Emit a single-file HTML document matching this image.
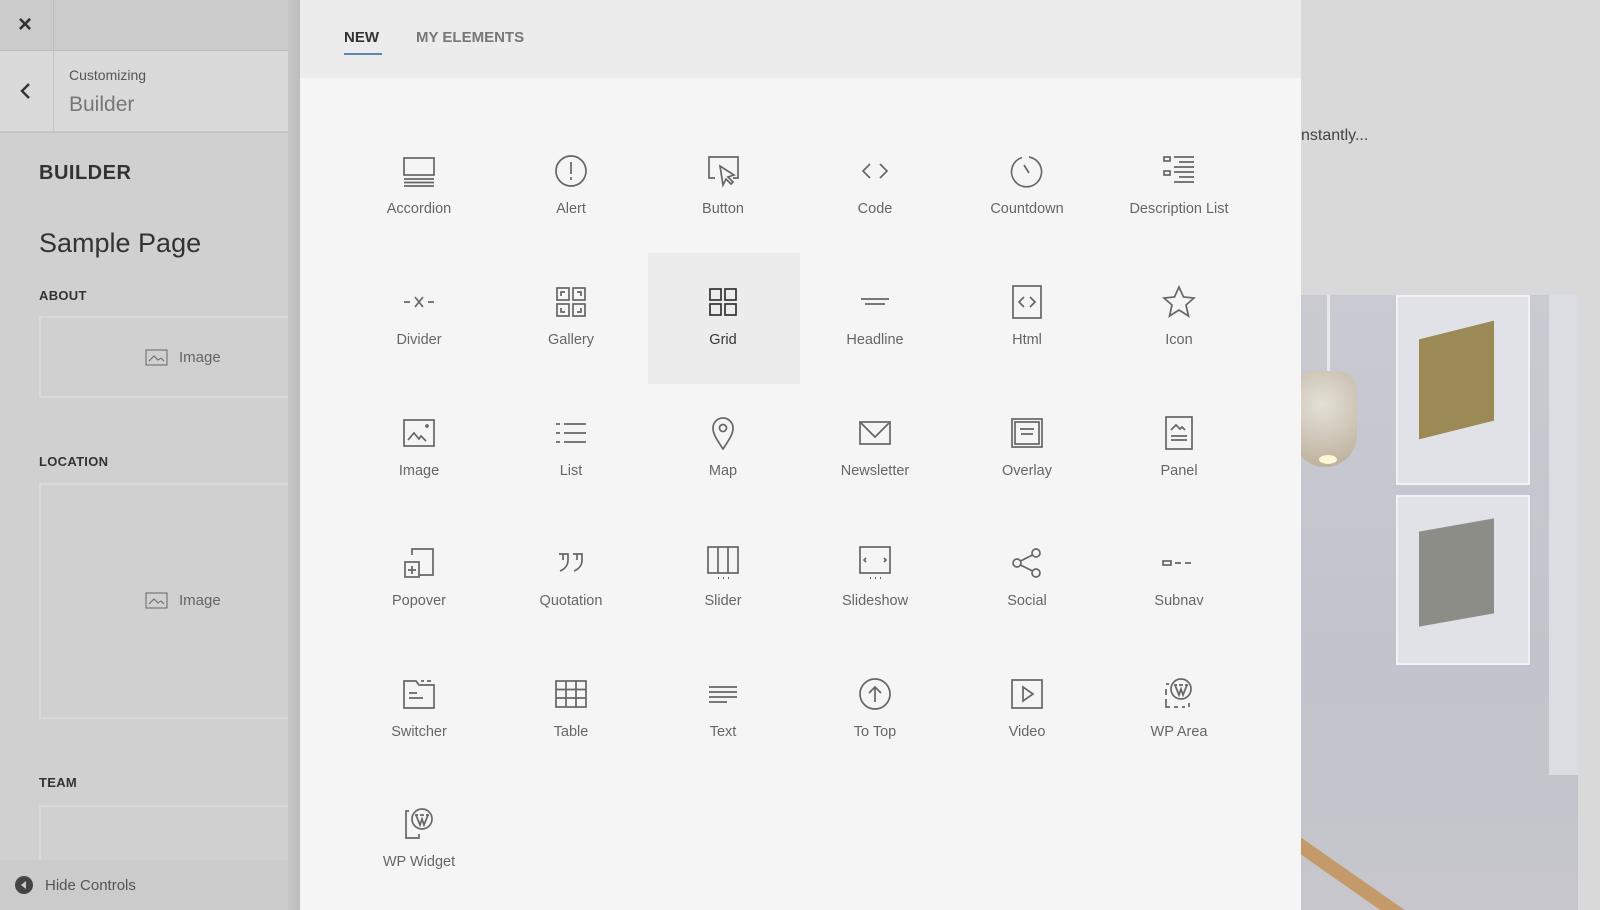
<!DOCTYPE html>
<html><head><meta charset="utf-8"><style>
*{margin:0;padding:0;box-sizing:border-box}
html,body{width:1600px;height:910px;overflow:hidden}
body{position:relative;background:#d8d8d8;font-family:"Liberation Sans",sans-serif}
.abs{position:absolute}
.lp{left:0;top:0;width:300px;height:910px;background:#d0d0d0;overflow:hidden}
.modal{left:300px;top:0;width:1001px;height:910px;background:#f5f5f5;overflow:hidden}
.hdr{left:0;top:0;width:1001px;height:78px;background:#ececec}
.cell{position:absolute;width:152px;height:131px;text-align:center}
.cell svg{position:absolute;left:59px;top:32px;width:34px;height:34px;fill:none;stroke:#666;stroke-width:1.7}
.cell span{position:absolute;left:0;width:152px;top:78px;font-size:14.5px;color:#666;line-height:18px}
.sec{font-size:13px;font-weight:bold;color:#333;letter-spacing:.3px}
.box{border:2px solid #dadada;left:39px;width:270px}
.imgl{font-size:15px;color:#666}
</style></head><body>
<!-- right preview -->
<div class="abs" style="left:1301px;top:0;width:299px;height:910px;background:#d9d9d9"></div>
<div class="abs" style="left:1301px;top:127px;font-size:16px;color:#444">nstantly...</div>
<div class="abs" style="left:1301px;top:295px;width:277px;height:615px;background:linear-gradient(180deg,#c9cad2,#c2c3cc 60%,#c6c6cc);overflow:hidden">
  <div class="abs" style="left:26px;top:0;width:3px;height:78px;background:#e8e8e8"></div>
  <div class="abs" style="left:-8px;top:76px;width:64px;height:96px;border-radius:20px 20px 32px 32px;background:radial-gradient(circle at 45% 35%,#e4e0d8,#b9ab95)"></div>
  <div class="abs" style="left:18px;top:160px;width:18px;height:9px;border-radius:50%;background:#fff6d8"></div>
  <div class="abs" style="left:95px;top:0;width:134px;height:190px;background:#e1e2e8;border:2px solid #f0f0f5"></div>
  <div class="abs" style="left:118px;top:35px;width:75px;height:100px;background:#9b8a55;transform:skewY(-14deg)"></div>
  <div class="abs" style="left:95px;top:200px;width:134px;height:170px;background:#e1e2e8;border:2px solid #f0f0f5"></div>
  <div class="abs" style="left:118px;top:230px;width:75px;height:95px;background:#8d8d88;transform:skewY(-10deg)"></div>
  <div class="abs" style="left:248px;top:0;width:29px;height:480px;background:#dcdde3"></div>
  <div class="abs" style="left:-20px;top:530px;width:240px;height:14px;background:#c49a6a;transform:rotate(35deg);transform-origin:left"></div>
</div>
<!-- left panel -->
<div class="abs lp">
  <div class="abs" style="left:0;top:0;width:300px;height:51px;background:#cbcbcb;border-bottom:1px solid #bdbdbd"></div>
  <div class="abs" style="left:53px;top:0;width:1px;height:133px;background:#bdbdbd"></div>
  <div class="abs" style="left:18px;top:11px;font-size:24px;font-weight:bold;color:#333">×</div>
  <div class="abs" style="left:0;top:51px;width:300px;height:82px;background:#dadada;border-bottom:2px solid #c4c4c4"></div>
  <div class="abs" style="left:53px;top:51px;width:1px;height:82px;background:#c4c4c4"></div>
  <svg class="abs" style="left:19px;top:82px" width="14" height="18"><path d="M10 2L3 9l7 7" stroke="#333" stroke-width="2.4" fill="none"/></svg>
  <div class="abs" style="left:69px;top:67px;font-size:14px;color:#555">Customizing</div>
  <div class="abs" style="left:69px;top:93px;font-size:21px;color:#777">Builder</div>
  <div class="abs" style="left:39px;top:162px;font-size:20px;font-weight:bold;color:#333;letter-spacing:.5px">BUILDER</div>
  <div class="abs" style="left:39px;top:228px;font-size:27px;color:#333">Sample Page</div>
  <div class="abs sec" style="left:39px;top:288px">ABOUT</div>
  <div class="abs box" style="top:316px;height:82px"></div>
  <svg class="abs" style="left:145px;top:349px" width="23" height="17"><rect x="1" y="1" width="21" height="15" fill="none" stroke="#666"/><path d="M4 12l5-5 4 4 3-2 3 3" fill="none" stroke="#666"/></svg>
  <div class="abs imgl" style="left:179px;top:349px">Image</div>
  <div class="abs sec" style="left:39px;top:454px">LOCATION</div>
  <div class="abs box" style="top:483px;height:236px"></div>
  <svg class="abs" style="left:145px;top:592px" width="23" height="17"><rect x="1" y="1" width="21" height="15" fill="none" stroke="#666"/><path d="M4 12l5-5 4 4 3-2 3 3" fill="none" stroke="#666"/></svg>
  <div class="abs imgl" style="left:179px;top:592px">Image</div>
  <div class="abs sec" style="left:39px;top:775px">TEAM</div>
  <div class="abs box" style="top:805px;height:80px"></div>
  <div class="abs" style="left:0;top:860px;width:288px;height:50px;background:#cbcbcb"></div>
  <div class="abs" style="left:15px;top:876px;width:18px;height:18px;border-radius:50%;background:#444"></div>
  <svg class="abs" style="left:15px;top:876px" width="18" height="18"><path d="M11 5L6 9l5 4z" fill="#cbcbcb"/></svg>
  <div class="abs" style="left:45px;top:877px;font-size:15px;color:#555">Hide Controls</div>
  <div class="abs" style="left:288px;top:0;width:12px;height:910px;background:linear-gradient(90deg,#c8c8c8,#bcbcbc)"></div>
</div>
<!-- modal -->
<div class="abs modal">
  <div class="abs hdr">
    <div class="abs" style="left:44px;top:29px;font-size:15px;font-weight:bold;color:#333">NEW</div>
    <div class="abs" style="left:44px;top:53px;width:38px;height:2px;background:#5b85b5"></div>
    <div class="abs" style="left:116px;top:29px;font-size:15px;font-weight:bold;color:#777">MY ELEMENTS</div>
  </div>
  <div class="abs" style="left:43px;top:0;width:912px;height:910px">
  <div class="cell" style="left:0;top:122px"><svg viewBox="0 0 34 34"><rect x="2" y="4" width="30" height="17"/><path d="M2 25h30M2 28.5h30M2 32h30"/></svg><span>Accordion</span></div>
  <div class="cell" style="left:152px;top:122px"><svg viewBox="0 0 34 34"><circle cx="17" cy="17" r="15"/><path d="M17 8v12M17 23v3"/></svg><span>Alert</span></div>
  <div class="cell" style="left:304px;top:122px"><svg viewBox="0 0 34 34"><path d="M9 24H3V3h29v21h-5"/><path d="M14 12l3 19 3-6 5 5 2-2-5-5 6-2z"/></svg><span>Button</span></div>
  <div class="cell" style="left:456px;top:122px"><svg viewBox="0 0 34 34"><path d="M12 10l-7 7 7 7M22 10l7 7-7 7"/></svg><span>Code</span></div>
  <div class="cell" style="left:608px;top:122px"><svg viewBox="0 0 34 34"><path d="M19 3A15 15 0 1 1 12 3.5"/><path d="M14 11l5 8"/></svg><span>Countdown</span></div>
  <div class="cell" style="left:760px;top:122px"><svg viewBox="0 0 34 34"><rect x="2" y="3" width="6" height="4"/><rect x="2" y="17" width="6" height="4"/><path d="M12 3h20M17 8h15M12 13h20M12 18h20M17 23h15M12 28h20"/></svg><span>Description List</span></div>
  <div class="abs" style="left:305px;top:253px;width:152px;height:131px;background:#ececec"></div>
  <div class="cell" style="left:0;top:253px"><svg viewBox="0 0 34 34"><path d="M2 17h6M26 17h6M13 12l8 10M21 12l-8 10"/></svg><span>Divider</span></div>
  <div class="cell" style="left:152px;top:253px"><svg viewBox="0 0 34 34"><rect x="3" y="3" width="12" height="12"/><rect x="19" y="3" width="12" height="12"/><rect x="3" y="19" width="12" height="12"/><rect x="19" y="19" width="12" height="12"/><path d="M7 11V7h4M23 7h4v4M7 23v4h4M23 27h4v-4"/></svg><span>Gallery</span></div>
  <div class="cell" style="left:304px;top:253px"><svg viewBox="0 0 34 34" style="stroke:#333"><rect x="4" y="4" width="11" height="11"/><rect x="19" y="4" width="11" height="11"/><rect x="4" y="19" width="11" height="11"/><rect x="19" y="19" width="11" height="11"/></svg><span style="color:#333">Grid</span></div>
  <div class="cell" style="left:456px;top:253px"><svg viewBox="0 0 34 34"><path d="M3 14h28M7 19h20"/></svg><span>Headline</span></div>
  <div class="cell" style="left:608px;top:253px"><svg viewBox="0 0 34 34"><rect x="3" y="1" width="28" height="32"/><path d="M14 12l-5 5 5 5M20 12l5 5-5 5"/></svg><span>Html</span></div>
  <div class="cell" style="left:760px;top:253px"><svg viewBox="0 0 34 34"><path d="M17 2l4.5 10 10.5 1-8 7 2.5 11-9.5-6-9.5 6 2.5-11-8-7 10.5-1z"/></svg><span>Icon</span></div>
  <div class="cell" style="left:0;top:384px"><svg viewBox="0 0 34 34"><rect x="2" y="4" width="30" height="26"/><path d="M6 24l6-7 5 6 2-3 5 5"/><circle cx="25" cy="10" r="1"/></svg><span>Image</span></div>
  <div class="cell" style="left:152px;top:384px"><svg viewBox="0 0 34 34"><path d="M2 8h4M2 17h4M2 26h4M10 8h22M10 17h22M10 26h22"/></svg><span>List</span></div>
  <div class="cell" style="left:304px;top:384px"><svg viewBox="0 0 34 34"><path d="M17 33C9 21 7 17 7 12a10 10 0 0 1 20 0c0 5-2 9-10 21z"/><circle cx="17" cy="12" r="3.5"/></svg><span>Map</span></div>
  <div class="cell" style="left:456px;top:384px"><svg viewBox="0 0 34 34"><rect x="2" y="6" width="30" height="22"/><path d="M2 6l15 15 15-15"/></svg><span>Newsletter</span></div>
  <div class="cell" style="left:608px;top:384px"><svg viewBox="0 0 34 34"><rect x="2" y="3" width="30" height="28"/><rect x="5" y="6" width="24" height="22"/><path d="M10 13h14M11 18h12"/></svg><span>Overlay</span></div>
  <div class="cell" style="left:760px;top:384px"><svg viewBox="0 0 34 34"><rect x="4" y="1" width="26" height="32"/><path d="M9 14l5-5 4 4 2-2 3 3M9 20h16M9 24h16"/></svg><span>Panel</span></div>
  <div class="cell" style="left:0;top:514px"><svg viewBox="0 0 34 34"><path d="M10 9V3h21v26H17"/><rect x="3" y="16" width="14" height="15"/><path d="M10 20v8M6 24h8"/></svg><span>Popover</span></div>
  <div class="cell" style="left:152px;top:514px"><svg viewBox="0 0 34 34"><path d="M5 8h9v6c0 5-3 9-8 11M9 8v6M19 8h9v6c0 5-3 9-8 11M23 8v6"/></svg><span>Quotation</span></div>
  <div class="cell" style="left:304px;top:514px"><svg viewBox="0 0 34 34"><rect x="2" y="1" width="30" height="26"/><path d="M12 1v26M22 1v26"/><path d="M12 32h1M17 32h1M22 32h1" stroke-width="2"/></svg><span>Slider</span></div>
  <div class="cell" style="left:456px;top:514px"><svg viewBox="0 0 34 34"><rect x="2" y="1" width="30" height="26"/><path d="M8 12l-2 2 2 2M26 12l2 2-2 2"/><path d="M12 32h1M17 32h1M22 32h1" stroke-width="2"/></svg><span>Slideshow</span></div>
  <div class="cell" style="left:608px;top:514px"><svg viewBox="0 0 34 34"><circle cx="7" cy="17" r="4"/><circle cx="26" cy="7" r="4"/><circle cx="26" cy="27" r="4"/><path d="M10.5 15l12-6M10.5 19l12 6"/></svg><span>Social</span></div>
  <div class="cell" style="left:760px;top:514px"><svg viewBox="0 0 34 34"><rect x="1" y="15" width="8" height="4"/><path d="M13 17h6M23 17h6"/></svg><span>Subnav</span></div>
  <div class="cell" style="left:0;top:645px"><svg viewBox="0 0 34 34"><path d="M2 31V4h12l3 4h15v23z"/><path d="M19 4h3M25 4h4M7 16h8M7 21h14"/></svg><span>Switcher</span></div>
  <div class="cell" style="left:152px;top:645px"><svg viewBox="0 0 34 34"><rect x="2" y="4" width="30" height="26"/><path d="M12 4v26M22 4v26M2 12.5h30M2 21h30"/></svg><span>Table</span></div>
  <div class="cell" style="left:304px;top:645px"><svg viewBox="0 0 34 34"><path d="M3 10h28M3 15h28M3 20h28M3 25h18"/></svg><span>Text</span></div>
  <div class="cell" style="left:456px;top:645px"><svg viewBox="0 0 34 34"><circle cx="17" cy="17" r="15"/><path d="M17 25V10M11 16l6-6 6 6"/></svg><span>To Top</span></div>
  <div class="cell" style="left:608px;top:645px"><svg viewBox="0 0 34 34"><rect x="2" y="3" width="30" height="28"/><path d="M13 10v14l10-7z"/></svg><span>Video</span></div>
  <div class="cell" style="left:760px;top:645px"><svg viewBox="0 0 34 34"><circle cx="19" cy="12" r="10"/><path d="M13 8l4 10 2-6 2 6 4-10M12 8h3M17 8h4M23 8h3"/><path d="M4 7h3M4 12v6M4 22v8h4M12 30h4M20 30h3M27 26v4"/></svg><span>WP Area</span></div>
  <div class="cell" style="left:0;top:775px"><svg viewBox="0 0 34 34"><circle cx="20" cy="12" r="10"/><path d="M14 8l4 10 2-6 2 6 4-10M13 8h3M18 8h4M24 8h3"/><path d="M7 4H4v27h13v-4"/></svg><span>WP Widget</span></div>
  </div>
</div>
</body></html>
